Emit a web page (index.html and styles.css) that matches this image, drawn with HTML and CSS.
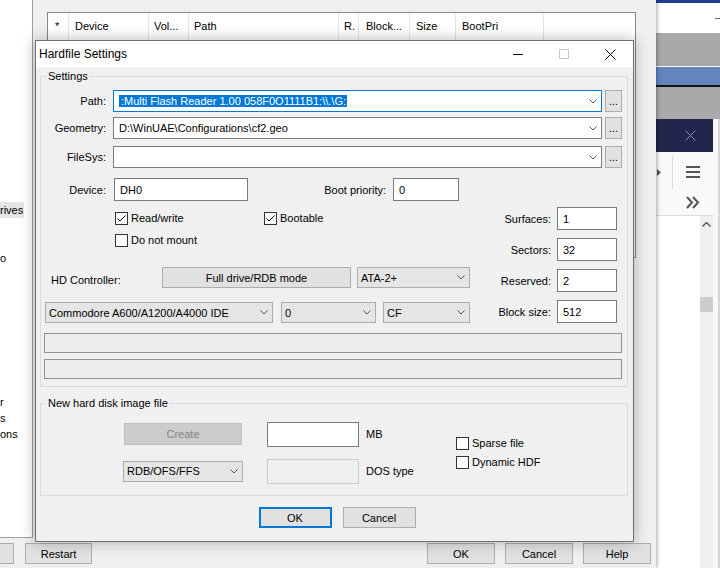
FILE: index.html
```html
<!DOCTYPE html>
<html lang="en">
<head>
<meta charset="utf-8">
<title>Hardfile Settings</title>
<link rel="stylesheet" href="styles.css">
</head>
<body>
<div class="desktop">

  <div class="appwin">
    <div class="app-top"><span class="app-min"></span></div>
    <div class="app-gray"></div>
    <div class="app-sep"></div>
    <div class="app-blue"></div>
    <div class="app-gray app-gray2"></div>
    <div class="app-lower">
      <div class="panel">
        <div class="panel-title">
          <span class="panel-close">
            <svg width="11" height="11" viewBox="0 0 11 11"><path d="M0.5 0.5L10.5 10.5M10.5 0.5L0.5 10.5" stroke="#8c8fab" stroke-width="1" fill="none"/></svg>
          </span>
        </div>
        <div class="panel-tools">
          <div class="tools-left">
            <svg width="4" height="7" viewBox="0 0 4 7"><path d="M0 0L4 3.5L0 7Z" fill="#555"/></svg>
          </div>
          <div class="tools-right">
            <svg width="14" height="12" viewBox="0 0 14 12"><path d="M0 1H14M0 6H14M0 11H14" stroke="#555" stroke-width="2" fill="none"/></svg>
            <svg width="14" height="13" viewBox="0 0 14 13"><path d="M1 1L6 6.5L1 12M7 1L12 6.5L7 12" stroke="#555" stroke-width="2" fill="none"/></svg>
          </div>
        </div>
        <div class="panel-list">
          <div class="list-area"></div>
          <div class="vscroll">
            <svg width="9" height="5" viewBox="0 0 9 5"><path d="M0.5 4.5L4.5 0.5L8.5 4.5" stroke="#555" stroke-width="1.4" fill="none"/></svg>
            <div class="thumb"></div>
          </div>
        </div>
      </div>
      <div class="app-fill"></div>
    </div>
  </div>

  <div class="mainwin">
    <div class="main-top">
      <ul class="tree">
        <li class="tsel"><span>rives</span></li>
        <li class="skip3">o</li>
        <li class="skip9">r</li>
        <li>s</li>
        <li>ons</li>
      </ul>
      <div class="main-area">
        <div class="listview">
          <div class="lv-head">
            <span class="lvh w1">*</span>
            <span class="lvh w2">Device</span>
            <span class="lvh w3">Vol...</span>
            <span class="lvh w4">Path</span>
            <span class="lvh w5">R.</span>
            <span class="lvh w6">Block...</span>
            <span class="lvh w7">Size</span>
            <span class="lvh w8">BootPri</span>
          </div>
        </div>
      </div>
    </div>
    <div class="main-bottom">
      <button class="btn bw btn-partial" aria-label="Reset"></button>
      <button class="btn btn-restart">Restart</button>
      <button class="btn bw btn-push">OK</button>
      <button class="btn bw">Cancel</button>
      <button class="btn bw">Help</button>
    </div>
  </div>

  <div class="dialog">
    <div class="titlebar">
      <span class="title">Hardfile Settings</span>
      <div class="caption">
        <span class="cap-btn"><svg width="10" height="10" viewBox="0 0 10 10"><path d="M0 5.5H10" stroke="#000" stroke-width="1"/></svg></span>
        <span class="cap-btn"><svg width="10" height="10" viewBox="0 0 10 10"><rect x="0.5" y="0.5" width="9" height="9" fill="none" stroke="#c8c8c8" stroke-width="1"/></svg></span>
        <span class="cap-btn"><svg width="11" height="11" viewBox="0 0 11 11"><path d="M0.5 0.5L10.5 10.5M10.5 0.5L0.5 10.5" stroke="#000" stroke-width="1" fill="none"/></svg></span>
      </div>
    </div>

    <div class="dlg-body">
      <fieldset class="group group-settings">
        <legend>Settings</legend>

        <div class="frow r-path">
          <span class="flabel">Path:</span>
          <div class="combo combo-edit combo-wide focused">
            <span class="ctext"><span class="sel">:Multi Flash Reader 1.00 058F0O1111B1:\\.\G:</span></span>
            <span class="chev"><svg width="8" height="5" viewBox="0 0 8 5"><path d="M0.5 0.5L4 4L7.5 0.5" stroke="#555" stroke-width="1" fill="none"/></svg></span>
          </div>
          <button class="btn dots">...</button>
        </div>

        <div class="frow r-geo">
          <span class="flabel">Geometry:</span>
          <div class="combo combo-edit combo-wide">
            <span class="ctext">D:\WinUAE\Configurations\cf2.geo</span>
            <span class="chev"><svg width="8" height="5" viewBox="0 0 8 5"><path d="M0.5 0.5L4 4L7.5 0.5" stroke="#555" stroke-width="1" fill="none"/></svg></span>
          </div>
          <button class="btn dots">...</button>
        </div>

        <div class="frow r-fs">
          <span class="flabel">FileSys:</span>
          <div class="combo combo-edit combo-wide">
            <span class="ctext"></span>
            <span class="chev"><svg width="8" height="5" viewBox="0 0 8 5"><path d="M0.5 0.5L4 4L7.5 0.5" stroke="#555" stroke-width="1" fill="none"/></svg></span>
          </div>
          <button class="btn dots">...</button>
        </div>

        <div class="frow r-dev">
          <span class="flabel">Device:</span>
          <span class="tb tb-dev">DH0</span>
          <span class="flabel flabel-boot">Boot priority:</span>
          <span class="tb tb-boot">0</span>
        </div>

        <div class="lower">
          <div class="left-block">
            <div class="chkrow chkrow1">
              <span class="chk chk-wide"><span class="cb"><svg width="11" height="11" viewBox="0 0 11 11"><path d="M1.5 5.5L4 8L9.5 2.5" stroke="#000" stroke-width="1" fill="none"/></svg></span><span class="cl">Read/write</span></span>
              <span class="chk"><span class="cb"><svg width="11" height="11" viewBox="0 0 11 11"><path d="M1.5 5.5L4 8L9.5 2.5" stroke="#000" stroke-width="1" fill="none"/></svg></span><span class="cl">Bootable</span></span>
            </div>
            <div class="chkrow chkrow2">
              <span class="chk"><span class="cb"></span><span class="cl">Do not mount</span></span>
            </div>
            <div class="hdrow">
              <span class="hdlabel">HD Controller:</span>
              <button class="btn btn-rdb">Full drive/RDB mode</button>
              <div class="combo combo-list c-ata">
                <span class="ctext">ATA-2+</span>
                <span class="chev"><svg width="8" height="5" viewBox="0 0 8 5"><path d="M0.5 0.5L4 4L7.5 0.5" stroke="#555" stroke-width="1" fill="none"/></svg></span>
              </div>
            </div>
            <div class="comborow">
              <div class="combo combo-list c-ctrl">
                <span class="ctext">Commodore A600/A1200/A4000 IDE</span>
                <span class="chev"><svg width="8" height="5" viewBox="0 0 8 5"><path d="M0.5 0.5L4 4L7.5 0.5" stroke="#555" stroke-width="1" fill="none"/></svg></span>
              </div>
              <div class="combo combo-list c-unit">
                <span class="ctext">0</span>
                <span class="chev"><svg width="8" height="5" viewBox="0 0 8 5"><path d="M0.5 0.5L4 4L7.5 0.5" stroke="#555" stroke-width="1" fill="none"/></svg></span>
              </div>
              <div class="combo combo-list c-type">
                <span class="ctext">CF</span>
                <span class="chev"><svg width="8" height="5" viewBox="0 0 8 5"><path d="M0.5 0.5L4 4L7.5 0.5" stroke="#555" stroke-width="1" fill="none"/></svg></span>
              </div>
            </div>
          </div>
          <div class="right-block">
            <span class="rlabel">Surfaces:</span><span class="tb">1</span>
            <span class="rlabel">Sectors:</span><span class="tb">32</span>
            <span class="rlabel">Reserved:</span><span class="tb">2</span>
            <span class="rlabel">Block size:</span><span class="tb">512</span>
          </div>
        </div>

        <div class="pbar"></div>
        <div class="pbar pbar2"></div>
      </fieldset>

      <fieldset class="group group-new">
        <legend>New hard disk image file</legend>
        <div class="newrow">
          <div class="ncol ncol1">
            <button class="btn btn-create" disabled>Create</button>
            <div class="combo combo-list c-dos">
              <span class="ctext">RDB/OFS/FFS</span>
              <span class="chev"><svg width="8" height="5" viewBox="0 0 8 5"><path d="M0.5 0.5L4 4L7.5 0.5" stroke="#555" stroke-width="1" fill="none"/></svg></span>
            </div>
          </div>
          <div class="ncol ncol2">
            <span class="tb tb-mb"></span>
            <span class="tb tb-mb tb-disabled"></span>
          </div>
          <div class="ncol ncol3">
            <span>MB</span>
            <span>DOS type</span>
          </div>
          <div class="ncol4">
            <span class="chk"><span class="cb"></span><span class="cl">Sparse file</span></span>
            <span class="chk"><span class="cb"></span><span class="cl">Dynamic HDF</span></span>
          </div>
        </div>
      </fieldset>

      <div class="dlg-buttons">
        <button class="btn btn-dlg btn-default">OK</button>
        <button class="btn btn-dlg">Cancel</button>
      </div>
    </div>
  </div>

</div>
</body>
</html>
```

FILE: styles.css
```css
* { box-sizing: border-box; }
html, body { margin: 0; padding: 0; }
body {
  width: 720px;
  height: 568px;
  overflow: hidden;
  background: #f0f0f0;
  font-family: "Liberation Sans", Arial, sans-serif;
  font-size: 11px;
  color: #000;
}
.desktop { position: relative; width: 720px; height: 568px; overflow: hidden; }

/* ---------- right-hand application window ---------- */
.appwin {
  position: absolute; left: 640px; top: 0;
  width: 80px; height: 568px;
  display: flex; flex-direction: column;
  background: #f3f3f3;
}
.app-top {
  height: 33px; border-top: 3px solid #1d3e94; background: #fff;
  display: flex; justify-content: flex-end; align-items: center;
}
.app-min { width: 5px; height: 1px; background: #666; }
.app-gray { height: 33px; background: #a9a9a9; flex: none; }
.app-sep { height: 1px; background: #fff; flex: none; }
.app-blue { height: 20px; background: #6486bf; border-bottom: 2px solid #141414; flex: none; }
.app-gray2 { height: 32px; }
.app-lower { flex: 1; display: flex; }
.panel { width: 73px; display: flex; flex-direction: column; background: #fff; }
.panel-title { height: 33px; background: #22254b; display: flex; justify-content: flex-end; flex: none; }
.panel-close { width: 46px; display: flex; align-items: center; justify-content: center; }
.panel-tools {
  height: 64px; flex: none; display: flex;
  background: #f9f9f9; border-bottom: 1px solid #dcdcdc;
}
.tools-left {
  width: 33px; height: 35px; margin-top: 3px;
  border-right: 1px solid #e0e0e0;
  display: flex; align-items: center; padding-left: 17px;
}
.tools-right {
  flex: 1; display: flex; flex-direction: column; align-items: center;
  padding-top: 14px; gap: 18px;
}
.panel-list { flex: 1; display: flex; }
.list-area { flex: 1; background: #fff; }
.vscroll {
  width: 13px; background: #f0f0f0;
  display: flex; flex-direction: column; align-items: center;
  padding-top: 6px;
}
.thumb { width: 13px; height: 15px; background: #cdcdcd; margin-top: 70px; }
.app-fill { flex: 1; background: #f7f7f7; border-right: 2px solid #d6d6d6; }

/* ---------- background WinUAE window ---------- */
.mainwin {
  position: absolute; left: 0; top: 0; z-index: 1;
  width: 656px; height: 568px;
  background: #f0f0f0;
  display: flex; flex-direction: column;
  box-shadow: 1px 0 4px rgba(0, 0, 0, 0.35);
}
.main-top { height: 538px; display: flex; flex: none; }
.tree {
  width: 33px; margin: 0; padding: 202px 0 0; list-style: none;
  background: #fff;
  border-right: 1px solid #a0a0a0; border-bottom: 1px solid #a0a0a0;
  overflow: hidden; white-space: nowrap;
}
.tree li { height: 16px; line-height: 16px; }
.tree li.tsel span { display: inline-block; height: 16px; background: #e5e5e5; padding-right: 1px; }
.tree li.skip3 { margin-top: 32px; }
.tree li.skip9 { margin-top: 128px; }

.main-area { flex: 1; padding: 12px 0 0 14px; }
.listview {
  width: 589px; height: 246px;
  border: 1px solid #828790; background: #fff;
}
.lv-head { display: flex; height: 28px; }
.lvh {
  border-right: 1px solid #e5e5e5;
  padding-left: 6px; line-height: 27px;
  white-space: nowrap; overflow: hidden;
}
.lvh.w1 { width: 21px; padding-left: 7px; }
.lvh.w2 { width: 80px; }
.lvh.w3 { width: 40px; padding-left: 5px; }
.lvh.w4 { width: 150px; padding-left: 5px; }
.lvh.w5 { width: 20px; padding-left: 5px; }
.lvh.w6 { width: 51px; padding-left: 7px; }
.lvh.w7 { width: 46px; }
.lvh.w8 { width: 88px; }

.main-bottom {
  flex: 1; display: flex; align-items: flex-start;
  padding: 5px 5px 0 0; gap: 10px;
}

/* ---------- generic controls ---------- */
.btn {
  height: 21px; padding: 0;
  background: #e1e1e1; border: 1px solid #adadad;
  font: inherit; color: #000;
  display: flex; align-items: center; justify-content: center;
  flex: none;
}
.bw { width: 68px; }
.btn-partial { margin-left: -54px; }
.btn-restart { width: 67px; margin-left: 1px; }
.btn-push { margin-left: auto; }

.combo {
  height: 22px; display: flex; align-items: center;
  border: 1px solid #7a7a7a; background: #fff; flex: none;
}
.combo.focused { border-color: #0078d7; }
.combo-list { height: 21px; background: #e5e5e5; border-color: #acacac; }
.ctext { flex: 1; padding-left: 5px; white-space: nowrap; overflow: hidden; }
.combo-list .ctext { padding-left: 3px; }
.sel { background: #0078d7; color: #fff; padding: 1px 1px 1px 2px; }
.chev { width: 17px; flex: none; display: flex; justify-content: center; align-items: center; }

.tb {
  height: 23px; border: 1px solid #7a7a7a; background: #fff;
  padding-left: 5px; display: flex; align-items: center; flex: none;
}
.tb-disabled { background: #f0f0f0; border-color: #cccccc; }

.chk { display: inline-flex; align-items: center; flex: none; }
.cb {
  width: 13px; height: 13px; border: 1px solid #333; background: #fff;
  display: flex; align-items: center; justify-content: center; flex: none;
}
.cl { margin-left: 3px; }

/* ---------- dialog ---------- */
.dialog {
  position: absolute; left: 35px; top: 40px; z-index: 2;
  width: 599px; height: 502px;
  border: 1px solid #6f6f6f; background: #f0f0f0;
  box-shadow: 0 0 14px rgba(0, 0, 0, 0.3);
  display: flex; flex-direction: column;
}
.titlebar { height: 26px; background: #fff; display: flex; align-items: center; flex: none; }
.title { flex: 1; padding-left: 3px; font-size: 12px; }
.caption { display: flex; align-self: stretch; }
.cap-btn { width: 46px; display: flex; align-items: center; justify-content: center; }

.dlg-body { flex: 1; padding: 2px 4px 0 4px; display: flex; flex-direction: column; }

.group {
  margin: 0; padding: 0 5px 7px 3px;
  border: 1px solid #dcdcdc;
  min-width: 0; width: 588px;
}
.group legend { padding: 0 2px; margin-left: 2px; line-height: 14px; height: 14px; }

.frow { display: flex; align-items: center; height: 22px; }
.r-path { margin-top: 7px; }
.r-geo { margin-top: 5px; }
.r-fs { margin-top: 7px; }
.r-dev { margin-top: 10px; height: 23px; }
.flabel { width: 62px; text-align: right; margin-right: 7px; flex: none; }
.combo-wide { width: 489px; }
.dots { width: 17px; height: 22px; margin-left: 3px; }
.tb-dev { width: 134px; margin-left: 1px; }
.flabel-boot { width: 138px; }
.tb-boot { width: 66px; }

.lower { display: flex; margin-top: 6px; }
.left-block { width: 426px; display: flex; flex-direction: column; }
.chkrow { display: flex; height: 16px; align-items: center; padding-left: 71px; }
.chkrow1 { margin-top: 3px; }
.chkrow2 { margin-top: 6px; }
.chk-wide { width: 149px; }
.hdrow { display: flex; align-items: center; height: 21px; margin-top: 19px; }
.hdlabel { width: 111px; margin-left: 7px; padding-top: 5px; flex: none; }
.btn-rdb { width: 189px; }
.c-ata { width: 113px; margin-left: 6px; }
.comborow { display: flex; height: 21px; margin-top: 14px; padding-left: 1px; }
.c-ctrl { width: 228px; }
.c-unit { width: 95px; margin-left: 8px; }
.c-type { width: 87px; margin-left: 7px; }

.right-block {
  margin-left: auto; margin-right: 5px;
  display: grid; grid-template-columns: auto 60px; grid-auto-rows: 23px;
  column-gap: 6px; row-gap: 8px; align-items: center;
}
.rlabel { text-align: right; }
.right-block .tb { width: 60px; }

.pbar { height: 20px; border: 1px solid #929292; background: #ececec; margin-top: 10px; }
.pbar2 { margin-top: 6px; }

.group-new { margin-top: 9px; padding-bottom: 10px; }
.newrow { display: flex; margin-top: 10px; }
.ncol { display: grid; grid-template-rows: 28px 28px; row-gap: 9px; align-items: center; }
.ncol1 { width: 120px; margin-left: 79px; }
.btn-create {
  width: 118px; height: 22px; margin-left: 1px;
  background: #cccccc; border-color: #bfbfbf; color: #838383;
}
.c-dos { width: 120px; }
.ncol2 { width: 92px; margin-left: 24px; }
.tb-mb { width: 92px; height: 25px; }
.ncol3 { width: 90px; margin-left: 7px; }
.ncol4 { display: flex; flex-direction: column; align-self: center; }
.ncol4 .chk { height: 19px; }

.dlg-buttons { display: flex; justify-content: center; gap: 11px; margin-top: 11px; padding-left: 5px; }
.btn-dlg { width: 73px; }
.btn-default { border: 2px solid #0078d7; }
```
